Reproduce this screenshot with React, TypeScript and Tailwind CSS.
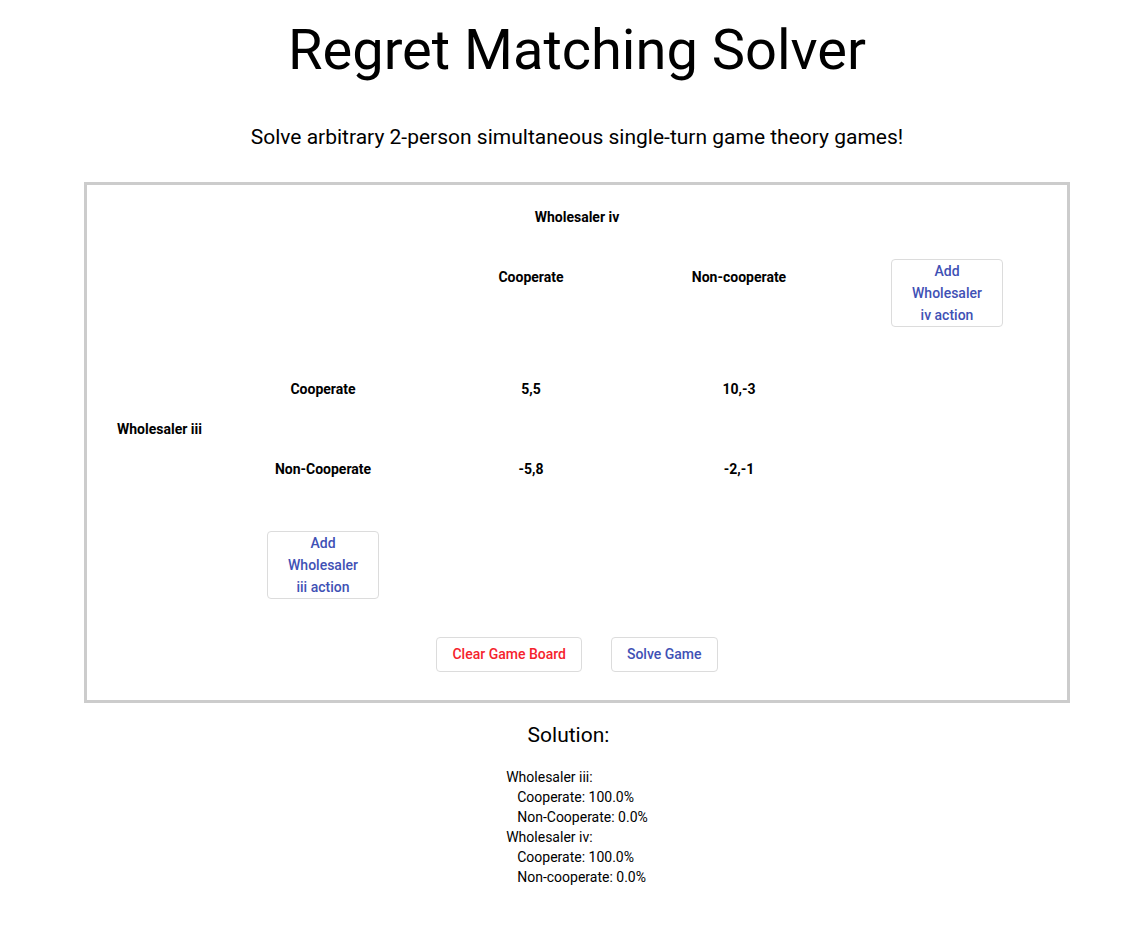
import React from "react";

const cellText = "text-[14px] font-bold leading-[20px] text-black";

function AddButton({ lines }: { lines: string[] }) {
  return (
    <button className="w-[112px] h-[68px] border border-[#dcdcdc] rounded-[4px] bg-white text-[#3f51b5] text-[14px] font-medium leading-[22px] flex flex-col items-center justify-center">
      {lines.map((l) => (
        <span key={l}>{l}</span>
      ))}
    </button>
  );
}

export default function App() {
  return (
    <div
      className="min-h-[931px] bg-white text-black"
      style={{ fontFamily: "Roboto, 'Liberation Sans', sans-serif" }}
    >
      <div className="pl-[17px] flex flex-col items-center">
        <h1 className="mt-[17px] text-[56px] leading-[66px] font-normal">Regret Matching Solver</h1>
        <p className="mt-[41px] text-[21px] leading-[26px]">
          Solve arbitrary 2-person simultaneous single-turn game theory games!
        </p>

        <div className="mt-[32px] w-[986px] border-[3px] border-[#cccccc] pt-[22px] pb-[28px] flex flex-col">
          <div className={`${cellText} text-center`}>Wholesaler iv</div>

          <div className="mt-[32px] pl-[13px] grid grid-cols-[119px_208px_208px_208px_208px] h-[68px] items-start">
            <div />
            <div />
            <div className={`${cellText} text-center mt-[8px]`}>Cooperate</div>
            <div className={`${cellText} text-center mt-[8px]`}>Non-cooperate</div>
            <div className="flex justify-center">
              <AddButton lines={["Add", "Wholesaler", "iv action"]} />
            </div>
          </div>

          <div className="mt-[22px] pl-[13px] grid grid-cols-[119px_208px_208px_208px_208px] grid-rows-[80px_80px]">
            <div className={`${cellText} row-span-2 flex items-center justify-center`}>Wholesaler iii</div>
            <div className={`${cellText} flex items-center justify-center`}>Cooperate</div>
            <div className={`${cellText} flex items-center justify-center`}>5,5</div>
            <div className={`${cellText} flex items-center justify-center`}>10,-3</div>
            <div />
            <div className={`${cellText} flex items-center justify-center`}>Non-Cooperate</div>
            <div className={`${cellText} flex items-center justify-center`}>-5,8</div>
            <div className={`${cellText} flex items-center justify-center`}>-2,-1</div>
            <div />
          </div>

          <div className="mt-[22px] pl-[13px] grid grid-cols-[119px_208px_208px_208px_208px]">
            <div />
            <div className="flex justify-center">
              <AddButton lines={["Add", "Wholesaler", "iii action"]} />
            </div>
          </div>

          <div className="mt-[38px] flex justify-center gap-[29px]">
            <button className="h-[35px] px-[15px] border border-[#dcdcdc] rounded-[4px] bg-white text-[#f5222d] text-[14px] font-medium">
              Clear Game Board
            </button>
            <button className="h-[35px] px-[15px] border border-[#dcdcdc] rounded-[4px] bg-white text-[#3f51b5] text-[14px] font-medium">
              Solve Game
            </button>
          </div>
        </div>
      </div>

      <h2 className="mt-[19px] text-center text-[21px] leading-[26px] font-normal">Solution:</h2>

      <div className="pl-[17px] flex justify-center">
        <div className="mt-[19px] text-[14px] leading-[20px] whitespace-pre">
          <div>Wholesaler iii:</div>
          <div className="pl-[11px]">Cooperate: 100.0%</div>
          <div className="pl-[11px]">Non-Cooperate: 0.0%</div>
          <div>Wholesaler iv:</div>
          <div className="pl-[11px]">Cooperate: 100.0%</div>
          <div className="pl-[11px]">Non-cooperate: 0.0%</div>
        </div>
      </div>
    </div>
  );
}
